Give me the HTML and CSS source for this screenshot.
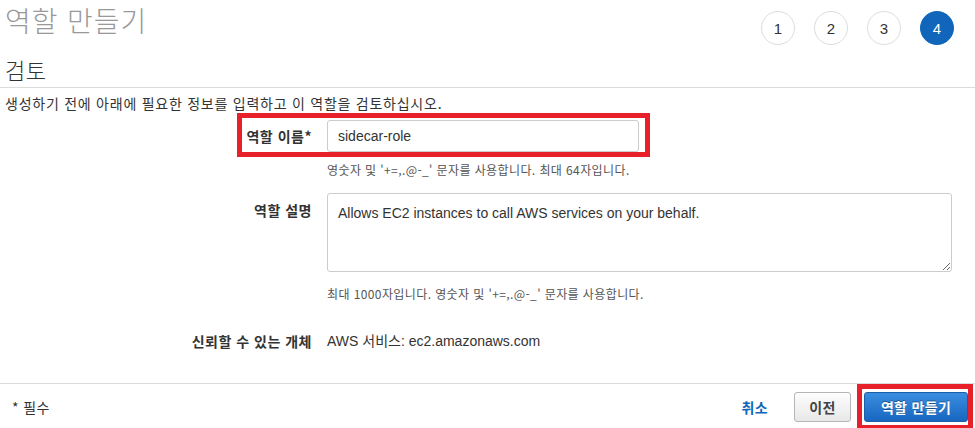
FILE: index.html
```html
<!DOCTYPE html>
<html lang="ko">
<head>
<meta charset="utf-8">
<title>역할 만들기</title>
<link rel="stylesheet" href="styles.css">
</head>
<body>
<div class="page">
  <header class="top">
    <div class="titles">
      <h1 class="title">역할 만들기</h1>
      <h2 class="subtitle">검토</h2>
    </div>
    <ol class="steps">
      <li class="step">1</li>
      <li class="step">2</li>
      <li class="step">3</li>
      <li class="step active">4</li>
    </ol>
  </header>
  <div class="divider"></div>
  <p class="intro">생성하기 전에 아래에 필요한 정보를 입력하고 이 역할을 검토하십시오.</p>

  <div class="form">
    <div class="row row-name">
      <label class="label">역할 이름*</label>
      <div class="field">
        <input class="input" type="text" value="sidecar-role">
      </div>
      <div class="highlight highlight-name"></div>
    </div>
    <div class="help help-name"><span></span><span>영숫자 및 '+=,.@-_' 문자를 사용합니다. 최대 64자입니다.</span></div>

    <div class="row row-desc">
      <label class="label label-top">역할 설명</label>
      <div class="field">
        <textarea class="textarea">Allows EC2 instances to call AWS services on your behalf.</textarea>
      </div>
    </div>
    <div class="help help-desc"><span></span><span>최대 1000자입니다. 영숫자 및 '+=,.@-_' 문자를 사용합니다.</span></div>

    <div class="row row-trust">
      <span class="label">신뢰할 수 있는 개체</span>
      <span class="value">AWS 서비스: ec2.amazonaws.com</span>
    </div>
  </div>

  <footer class="footer">
    <span class="required">* 필수</span>
    <div class="actions">
      <a class="cancel" href="#">취소</a>
      <button class="btn btn-prev" type="button">이전</button>
      <div class="create-wrap">
        <button class="btn btn-create" type="button">역할 만들기</button>
        <div class="highlight highlight-create"></div>
      </div>
    </div>
  </footer>
</div>
</body>
</html>
```

FILE: styles.css
```css
* { box-sizing: border-box; }
html, body { margin: 0; padding: 0; background: #fff; }
body {
  font-family: "Liberation Sans", Arial, "Noto Sans CJK KR", sans-serif;
  color: #333;
  width: 975px;
  height: 428px;
  overflow: hidden;
}
.page { position: relative; }

.top {
  display: flex;
  justify-content: space-between;
  align-items: flex-start;
  padding: 0 21px 0 5px;
}
.title {
  margin: 0;
  font-family: "Noto Sans CJK KR", sans-serif;
  font-weight: 300;
  font-size: 28px;
  letter-spacing: 0.9px;
  line-height: 41px;
  color: #999;
}
.subtitle {
  margin: 13px 0 0;
  font-family: "Noto Sans CJK KR", sans-serif;
  font-weight: 300;
  font-size: 22px;
  letter-spacing: 0.5px;
  line-height: 30px;
  color: #333;
}
.steps {
  list-style: none;
  margin: 11px 0 0;
  padding: 0;
  display: flex;
  gap: 19px;
}
.step {
  width: 34px;
  height: 34px;
  border-radius: 50%;
  border: 1px solid #ddd;
  display: flex;
  align-items: center;
  justify-content: center;
  font-size: 15px;
  color: #333;
}
.step.active {
  background: #1166bb;
  border-color: #1166bb;
  color: #fff;
}

.divider {
  margin-top: 3px;
  border-top: 1px solid #dcdcdc;
}
.intro {
  margin: 5px 0 0 5px;
  font-family: "Noto Sans CJK KR", sans-serif;
  font-size: 14px;
  letter-spacing: 0.75px;
  line-height: 20px;
  color: #333;
}

.form { margin-top: 7px; }
.row {
  position: relative;
  display: grid;
  grid-template-columns: 312px 1fr;
  column-gap: 15px;
  align-items: center;
}
.label {
  text-align: right;
  font-family: "Noto Sans CJK KR", sans-serif;
  font-weight: 700;
  font-size: 14px;
  letter-spacing: 0.5px;
  line-height: 20px;
  color: #333;
}
.label-top { align-self: start; padding-top: 7px; }
.row-desc { align-items: start; margin-top: 15px; }
.input {
  display: block;
  width: 312px;
  height: 32px;
  border: 1px solid #ccc;
  border-radius: 3px;
  padding: 0 10px;
  font-family: "Liberation Sans", Arial, sans-serif;
  font-size: 14px;
  color: #333;
  background: #fff;
}
.textarea {
  display: block;
  width: 625px;
  height: 79px;
  border: 1px solid #ccc;
  border-radius: 3px;
  padding: 10px 10px;
  font-family: "Liberation Sans", Arial, sans-serif;
  font-size: 14px;
  line-height: 18px;
  color: #333;
  resize: both;
}
.help {
  display: grid;
  grid-template-columns: 312px 1fr;
  column-gap: 15px;
  font-family: "Noto Sans CJK KR", sans-serif;
  font-size: 12px;
  letter-spacing: 0.4px;
  line-height: 16px;
  color: #555;
}
.help-name { margin-top: 10px; }
.help-desc { margin-top: 14px; }
.row-trust { margin-top: 29px; }
.value {
  font-family: "Liberation Sans", Arial, "Noto Sans CJK KR", sans-serif;
  font-size: 14px;
  line-height: 20px;
  color: #333;
}

.highlight {
  position: absolute;
  border: 5px solid #e8202a;
  pointer-events: none;
}
.highlight-name {
  left: 237px;
  top: -7px;
  width: 413px;
  height: 44px;
}

.footer {
  margin-top: 32px;
  border-top: 1px solid #dcdcdc;
  display: flex;
  justify-content: space-between;
  align-items: center;
  padding: 8px 7px 0 12px;
}
.required {
  font-family: "Noto Sans CJK KR", sans-serif;
  font-size: 14px;
  letter-spacing: 0.4px;
  color: #333;
}
.actions {
  display: flex;
  align-items: center;
}
.cancel {
  font-family: "Noto Sans CJK KR", sans-serif;
  font-size: 14px;
  letter-spacing: 0.4px;
  font-weight: 700;
  color: #1166bb;
  text-decoration: none;
  margin-right: 26px;
}
.btn {
  height: 30px;
  border-radius: 3px;
  font-family: "Noto Sans CJK KR", sans-serif;
  font-size: 14px;
  letter-spacing: 0.3px;
  font-weight: 700;
  cursor: pointer;
  padding: 0;
}
.btn-prev {
  width: 57px;
  border: 1px solid #b5b5b5;
  background: linear-gradient(#fdfdfd, #e8e8e8);
  color: #444;
  margin-right: 13px;
}
.create-wrap { position: relative; }
.btn-create {
  display: block;
  width: 104px;
  border: 1px solid #1a5fa8;
  background: linear-gradient(#3a8ee0, #1766c0);
  color: #fff;
  text-shadow: 0 -1px 0 rgba(0, 0, 0, 0.35);
}
.highlight-create {
  left: -7px;
  top: -8px;
  width: 116px;
  height: 46px;
}
```
